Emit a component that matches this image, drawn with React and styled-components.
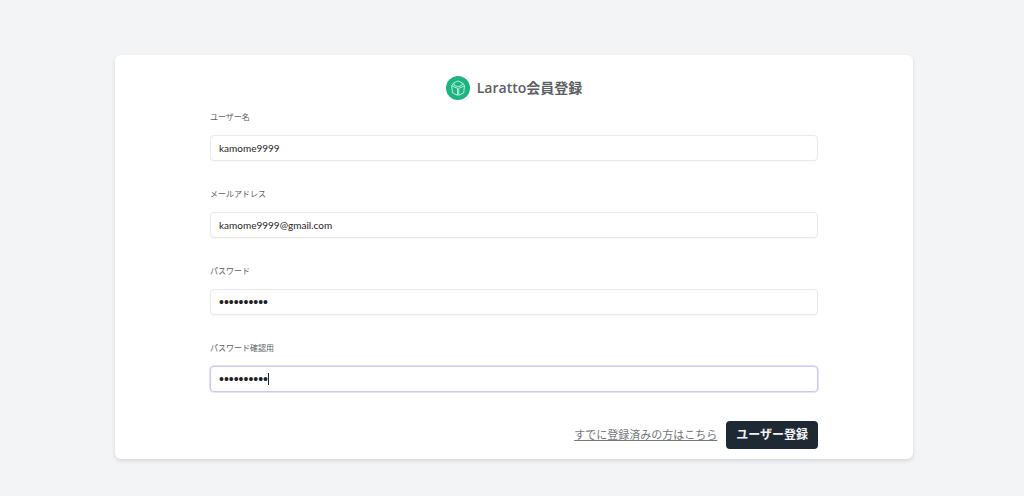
import React, { useState } from 'react';
import styled, { createGlobalStyle } from 'styled-components';

const GlobalStyle = createGlobalStyle`
  * {
    box-sizing: border-box;
  }

  body {
    margin: 0;
    background-color: #f3f4f6;
    color: #5b5e63;
    font-family: Lato, 'Noto Sans CJK JP', sans-serif;
  }
`;

const Page = styled.main`
  min-height: 100vh;
  padding: 55px 111px 37px 115px;
`;

const Card = styled.section`
  padding: 20px 95px 10px;
  background-color: #fff;
  border-radius: 6px;
  box-shadow: 0 2px 4px rgba(0, 0, 0, 0.12);
`;

const Header = styled.header`
  display: flex;
  align-items: center;
  justify-content: center;
  gap: 7px;
  height: 26px;
`;

const Title = styled.h1`
  margin: 0;
  font-family: 'Open Sans', 'Noto Sans CJK JP', sans-serif;
  font-size: 14px;
  line-height: 24px;
  font-weight: 600;
`;

const Form = styled.form`
  display: flex;
  flex-direction: column;
  gap: 25px;
  padding-top: 8px;
`;

const Field = styled.div`
  display: flex;
  flex-direction: column;
  gap: 10px;
`;

const Label = styled.label`
  font-size: 8px;
  line-height: 16px;
`;

const InputWrap = styled.div`
  position: relative;
  display: flex;
`;

const Input = styled.input`
  width: 100%;
  height: 26px;
  padding: 0 8px;
  border: 1px solid ${({ $active }) => ($active ? '#cbc6f6' : '#e8e9ec')};
  border-radius: 4px;
  outline: none;
  background-color: #fff;
  box-shadow: ${({ $active }) =>
    $active ? '0 0 0 1px #e4e4fb' : '0 1px 1px rgba(0, 0, 0, 0.03)'};
  color: #1f2226;
  font-family: inherit;
  font-size: 10px;

  &[type='password'] {
    font-family: 'Liberation Sans', sans-serif;
    font-size: 14px;
  }
`;

const Caret = styled.span`
  position: absolute;
  top: 7px;
  left: 58px;
  width: 1px;
  height: 12px;
  background-color: #222;
`;

const Actions = styled.div`
  display: flex;
  align-items: center;
  justify-content: flex-end;
  gap: 9px;
  padding-top: 4px;
`;

const LoginLink = styled.a`
  color: #74777c;
  font-size: 11px;
  line-height: 16px;
  text-decoration: underline;
`;

const SubmitButton = styled.button`
  height: 28px;
  padding: 0 10px;
  border: 0;
  border-radius: 4px;
  background-color: #1f2933;
  color: #f3f4f6;
  font-family: inherit;
  font-size: 12px;
  line-height: 16px;
  font-weight: 600;
  cursor: pointer;
`;

const Logo = () => (
  <svg width="24" height="24" viewBox="0 0 24 24" fill="none" aria-hidden="true">
    <circle cx="12" cy="12" r="12" fill="#1db482" />
    <g stroke="#c9f2df" strokeWidth="0.9" strokeLinejoin="round">
      <path d="M7.6 7.1 12 4.9l4.6 2.2-.8 2.1L12 10.9 8.200 9.200Z" />
      <path d="M5.700 9.800 11.500 12.400v6.900l-5-2.400Z" />
      <path d="M18.500 9.800 12.700 12.400v6.900l5-2.400Z" />
      <path d="M5.700 9.800 7.600 7.100M18.500 9.800 16.600 7.100" />
    </g>
  </svg>
);

const fields = [
  { name: 'name', label: 'ユーザー名', type: 'text' },
  { name: 'email', label: 'メールアドレス', type: 'email' },
  { name: 'password', label: 'パスワード', type: 'password' },
  { name: 'confirmation', label: 'パスワード確認用', type: 'password' },
];

const App = () => {
  const [values, setValues] = useState({
    name: 'kamome9999',
    email: 'kamome9999@gmail.com',
    password: 'kamome9999',
    confirmation: 'kamome9999',
  });
  const [active, setActive] = useState('confirmation');
  const [showCaret, setShowCaret] = useState(true);

  const handleChange = (e) => {
    setValues({ ...values, [e.target.name]: e.target.value });
  };

  const handleFocus = (e) => {
    setActive(e.target.name);
    setShowCaret(false);
  };

  return (
    <>
      <GlobalStyle />
      <Page>
        <Card>
          <Header>
            <Logo />
            <Title>Laratto会員登録</Title>
          </Header>
          <Form onSubmit={(e) => e.preventDefault()}>
            {fields.map(({ name, label, type }) => (
              <Field key={name}>
                <Label htmlFor={name}>{label}</Label>
                <InputWrap>
                  <Input
                    id={name}
                    name={name}
                    type={type}
                    value={values[name]}
                    $active={active === name}
                    onChange={handleChange}
                    onFocus={handleFocus}
                  />
                  {showCaret && active === name && <Caret />}
                </InputWrap>
              </Field>
            ))}
            <Actions>
              <LoginLink href="#login">すでに登録済みの方はこちら</LoginLink>
              <SubmitButton type="submit">ユーザー登録</SubmitButton>
            </Actions>
          </Form>
        </Card>
      </Page>
    </>
  );
};

export default App;
